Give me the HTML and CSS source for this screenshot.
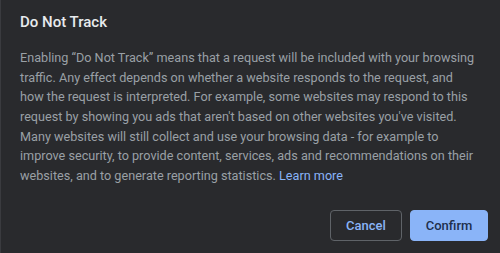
FILE: index.html
```html
<!DOCTYPE html>
<html lang="en">
<head>
    <meta charset="UTF-8">
    <meta name="viewport" content="width=device-width, initial-scale=1.0">
    <title>Do Not Track</title>
    <link rel="stylesheet" href="styles.css">
</head>
<body>
    <div class="dialog">
        <h2 class="dialog-title">Do Not Track</h2>
        <p class="dialog-body">
            Enabling “Do Not Track” means that a request will be included with your browsing<br>
            traffic. Any effect depends on whether a website responds to the request, and<br>
            how the request is interpreted. For example, some websites may respond to this<br>
            request by showing you ads that aren't based on other websites you've visited.<br>
            Many websites will still collect and use your browsing data - for example to<br>
            improve security, to provide content, services, ads and recommendations on their<br>
            websites, and to generate reporting statistics. <a class="learn-more" href="#">Learn more</a>
        </p>
        <div class="dialog-buttons">
            <button class="btn btn-cancel">Cancel</button>
            <button class="btn btn-confirm">Confirm</button>
        </div>
    </div>
</body>
</html>
```

FILE: styles.css
```css
body {
    margin: 0;
    padding: 0;
    background: #292a2d;
    font-family: Roboto, "Noto Sans", sans-serif;
}

.dialog {
    box-sizing: border-box;
    width: 500px;
    height: 253px;
    background: #292a2d;
    border-left: 1px solid #3a3b3f;
    padding: 12px 12px 12px 19px;
    display: flex;
    flex-direction: column;
}

.dialog-title {
    margin: 0;
    font-size: 15px;
    font-weight: 500;
    line-height: 20px;
    color: #e8eaed;
}

.dialog-body {
    margin: 16px 0 0 0;
    font-size: 12.65px;
    line-height: 19.65px;
    color: #9aa0a6;
    white-space: nowrap;
}

.learn-more {
    color: #8ab4f8;
    text-decoration: none;
}

.dialog-buttons {
    display: flex;
    justify-content: flex-end;
    gap: 8px;
    margin-top: auto;
}

.btn {
    font-family: Roboto, "Noto Sans", sans-serif;
    font-size: 13px;
    font-weight: 500;
    height: 31px;
    border-radius: 4px;
    cursor: pointer;
}

.btn-cancel {
    width: 72px;
    background: transparent;
    border: 1px solid #5f6368;
    color: #8ab4f8;
}

.btn-confirm {
    width: 78px;
    background: #8ab4f8;
    border: 1px solid #8ab4f8;
    color: #202f4d;
}
```
